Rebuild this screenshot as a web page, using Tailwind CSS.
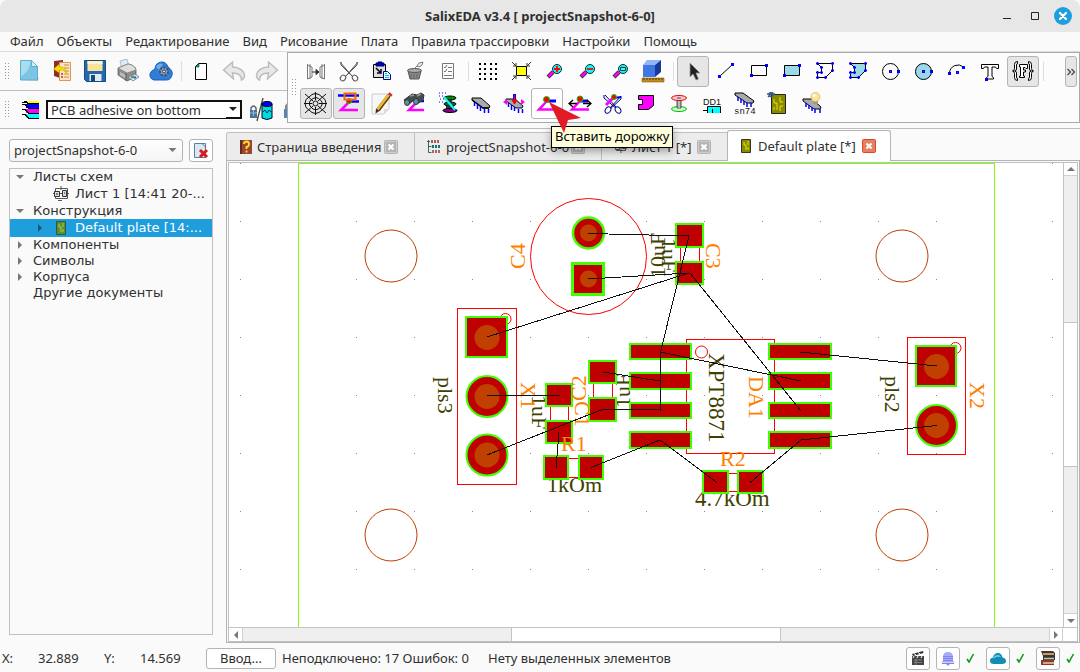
<!DOCTYPE html>
<html lang="ru">
<head>
    <meta charset="UTF-8">
    <meta name="viewport" content="width=device-width, initial-scale=1.0">
    <title>SalixEDA v3.4 [ projectSnapshot-6-0]</title>
    <script src="https://cdn.jsdelivr.net/npm/@tailwindcss/browser@4"></script>
</head>
<body class="relative flex flex-col h-screen overflow-hidden bg-[#fafafa] text-[#303030] text-[13px] leading-4 font-['Noto_Sans',sans-serif]">

    <!-- Title bar -->
    <header class="relative flex items-center justify-center h-8 shrink-0 bg-[#e7e7e7] rounded-t-lg">
        <h1 class="font-bold text-[13px]">SalixEDA v3.4 [ projectSnapshot-6-0]</h1>
        <div class="absolute right-2 top-[7px] flex items-center gap-[10px]">
            <button aria-label="Свернуть" class="w-[18px] h-[18px]"><svg class="w-[18px] h-[18px]" viewBox="0 0 18 18"><path d="M5 11.5h8" stroke="#222"/></svg></button>
            <button aria-label="Развернуть" class="w-[18px] h-[18px]"><svg class="w-[18px] h-[18px]" viewBox="0 0 18 18"><path d="M5.500 5.500h7v7h-7z" fill="none" stroke="#222"/></svg></button>
            <button aria-label="Закрыть" class="w-[18px] h-[18px] rounded-full bg-[#1f9ede]"><svg class="w-[18px] h-[18px]" viewBox="0 0 18 18"><path d="M6 6l6 6M12 6l-6 6" stroke="#fff" stroke-width="2.200" stroke-linecap="round"/></svg></button>
        </div>
    </header>

    <!-- Menu -->
    <nav class="flex items-center gap-[13px] h-5 px-[10px] pb-[2px] shrink-0 border-b border-[#dcdcdc]">
        <button>Файл</button>
        <button>Объекты</button>
        <button>Редактирование</button>
        <button>Вид</button>
        <button>Рисование</button>
        <button>Плата</button>
        <button>Правила трассировки</button>
        <button>Настройки</button>
        <button>Помощь</button>
    </nav>

    <!-- Toolbars -->
    <section class="flex shrink-0 border-b border-[#bdbdbd]">
        <div class="w-[287px] shrink-0 overflow-hidden">
            <div class="flex items-center gap-px h-[39px] pl-[5px] border-b border-[#bdbdbd]">
                <svg class="w-[7px] h-[17px] shrink-0" viewBox="0 0 7 17"><path d="M.5 0v17M3.500 0v17" stroke="#999" stroke-dasharray="1 2"/></svg>
                <button aria-label="Новый" class="w-8 h-[31px] shrink-0 px-1"><svg class="w-6 h-6" viewBox="0 0 24 24"><path d="M5 21l16 1 1-3-4-3z" fill="#ccc"/><path d="M3.500 1.500h11l6 6v13.500h-17z" fill="#7cc5e2" stroke="#5aaed0"/><path d="M4 2h10l-3 9-7 7z" fill="#a8dcef"/><path d="M14.500 1.500v6h6z" fill="#d9f1fa" stroke="#5aaed0"/></svg></button>
                <button aria-label="Открыть" class="w-8 h-[31px] shrink-0 px-1"><svg class="w-6 h-6" viewBox="0 0 24 24"><path d="M4 2l9-1v19l-9-3z" fill="#8c2f2c"/><path d="M9.500 3.500h11v18h-11z" fill="#fbe3bd" stroke="#d59b56"/><path d="M14 6h5M14 9h5M14 12h5M14 15h5M14 18h5" stroke="#c98c4a"/><circle cx="12" cy="15" r="1" fill="#c33"/><circle cx="12" cy="18" r="1" fill="#c33"/><path d="M3.500 10l6-5v3c5 0 7 2 7 6-2-3-4-3-7-3v3z" fill="#ffe100" stroke="#c59b00" stroke-width=".6"/></svg></button>
                <button aria-label="Сохранить" class="w-8 h-[31px] shrink-0 px-1"><svg class="w-6 h-6" viewBox="0 0 24 24"><path d="M1.500 1.500h21v21h-19l-2-2z" fill="#2268ad" stroke="#164a85"/><path d="M4.500 2h15v10h-15z" fill="#fbe39a"/><path d="M4.500 2h15v3h-15z" fill="#fff4c9"/><path d="M6.500 15h12v7h-12z" fill="#e3e9f0"/><path d="M8 16h4v6H8z" fill="#19497c"/></svg></button>
                <button aria-label="Печать" class="w-8 h-[31px] shrink-0 px-1"><svg class="w-6 h-6" viewBox="0 0 24 24"><path d="M4 2l7-2 2 8-7 2z" fill="#dcebf7" stroke="#8da9c0" stroke-width=".7"/><path d="M2 9l10-4q7 1 8 6v7l-9 4-9-6z" fill="#8d8d8d" stroke="#555" stroke-width=".7"/><path d="M2 9l10-4q7 1 8 6l-9 3z" fill="#dedede" stroke="#777" stroke-width=".6"/><path d="M4 13l6 3v4l-6-4z" fill="#bbb"/><path d="M10 14v8" stroke="#555"/><path d="M12 18l7-3 4 3-6 4z" fill="#d9e5f4" stroke="#668" stroke-width=".7"/><path d="M15 18.500l3-1" stroke="#3a3" stroke-width="2"/><path d="M18 19l2-1" stroke="#36c" stroke-width="2"/></svg></button>
                <button aria-label="Облако" class="w-8 h-[31px] shrink-0 px-1"><svg class="w-6 h-6" viewBox="0 0 24 24"><path d="M5 21a5 5 0 0 1-3-8c1-2 3-2 4-3 0-4 3-7 7-7 3 0 5 2 6 5 3 2 5 5 4 8-1 4-3 5-6 5z" fill="#2f7fd8" stroke="#1d5db0"/><path d="M7 8c1-3 4-4 7-3l-4 6z" fill="#6eaeee"/><circle cx="15" cy="12.500" r="4" fill="#8fa6bf" stroke="#3b5270" stroke-width="2" stroke-dasharray="2.500 1"/><circle cx="15" cy="12.500" r="1.500" fill="#dde6ef" stroke="#27405f"/></svg></button>
                <i class="w-[6px] h-5 shrink-0 flex justify-center"><i class="w-px bg-[#ddd]"></i></i>
                <button aria-label="Лист" class="w-8 h-[31px] shrink-0 px-1"><svg class="w-6 h-6" viewBox="0 0 24 24"><path d="M9.500 4.500h8v16h-11v-13z" fill="#fff" stroke="#000"/><path d="M6.500 8l3.500-4v4z" fill="#0aa08a" stroke="#033" stroke-width=".5"/></svg></button>
                <button aria-label="Отменить" class="w-8 h-[31px] shrink-0 px-1"><svg class="w-6 h-6" viewBox="0 0 24 24"><path d="M1.500 11l9-8v5c7 0 12 4 12 9 0 2-1 3-3 4 0-5-3-7-9-7l1 6z" fill="#e8e8e8" stroke="#bbb" stroke-width="1.400"/></svg></button>
                <button aria-label="Повторить" class="w-8 h-[31px] shrink-0 px-1"><svg class="w-6 h-6" viewBox="0 0 24 24"><path d="M22.500 11l-9-8v5c-7 0-12 4-12 9 0 2 1 3 3 4 0-5 3-7 9-7l-1 6z" fill="#e8e8e8" stroke="#bbb" stroke-width="1.400"/></svg></button>
            </div>
            <div class="flex items-center h-[37px] pl-[5px]">
                <svg class="w-[7px] h-[17px] shrink-0" viewBox="0 0 7 17"><path d="M.5 0v17M3.500 0v17" stroke="#999" stroke-dasharray="1 2"/></svg>
                <button aria-label="Слои" class="w-[34px] h-[31px] shrink-0 pl-[9px]"><svg class="w-[20px] h-[20px]" viewBox="0 0 20 20" shape-rendering="crispEdges"><path d="M5 1h13v2H5z" fill="#ff0"/><path d="M5 4h13v4H5z" fill="#00f"/><path d="M5 9h13v4H5z" fill="#f0f"/><path d="M5 14h13v4H5z" fill="#0ff"/><path d="M1 2.500h4l3 1h10M1 4.500h3l4 4h10M1 9.500h3l4 4h10M1 14.500h3l4 4h10M3 1.500h3" fill="none" stroke="#000"/></svg></button>
                <label class="relative block w-[196px] h-[19px] shrink-0">
                    <select aria-label="Слой" class="appearance-none block w-full h-full pl-[3px] pr-5 bg-white border-2 border-r-[1px] border-b-[1px] border-[#111] text-[13px] leading-4">
                        <option>PCB adhesive on bottom</option>
                    </select>
                    <span class="absolute right-0 bottom-0 w-4 h-[17px] border-r-2 border-b-2 border-[#111] bg-white pointer-events-none"><svg class="w-[14px] h-[14px]" viewBox="0 0 14 14"><path d="M3 5h8l-4 4z" fill="#222"/></svg></span>
                </label>
                <button aria-label="Фильтр слоёв" class="w-9 h-[31px] shrink-0 pl-[7px]"><svg class="w-6 h-6" viewBox="0 0 24 24"><path d="M2 12v-2q2.500-4 5 0v2" fill="none" stroke="#667" stroke-width="1.500"/><rect x="1" y="12" width="7" height="8" fill="#48729f"/><path d="M4.500 12v6M1 15h7" stroke="#9ab6d4"/><path d="M14 0L8 23" stroke="#444a20" stroke-width="1.300"/><path d="M13 6h10v14q-5 3-10 0z" fill="#0dd" stroke="#003"/><ellipse cx="18" cy="6" rx="5" ry="2.500" fill="#00f" stroke="#000"/><path d="M14 14l2-2 2 3 2-3 2 2" fill="none" stroke="#036"/></svg></button>
                <button aria-label="Блокировка" class="w-8 h-[31px] shrink-0 pl-1"><svg class="w-6 h-6" viewBox="0 0 24 24"><path d="M4 11V8q4-6 8 0v3" fill="none" stroke="#888" stroke-width="2"/><rect x="2" y="11" width="12" height="9" fill="#5b84b5"/></svg></button>
            </div>
        </div>

        <div class="flex flex-1 min-w-0 h-[71px] pt-[3px] pl-1 pr-[2px] border border-[#aaa] bg-[#fcfcfc]">
            <svg class="w-2 h-[17px] shrink-0 mt-[23px]" viewBox="0 0 8 17"><path d="M.5 0v17M3.500 0v17" stroke="#999" stroke-dasharray="1 2"/></svg>
            <div class="flex flex-col gap-px flex-1 min-w-0">
                <div class="flex gap-px">
                    <button aria-label="Отразить" class="w-8 h-[31px] shrink-0 px-1"><svg class="w-6 h-6" viewBox="0 0 24 24" fill="none" stroke="#777"><path d="M3.500 4v15M6 4v15M3 5l5 2v10l-5 2M20.500 4v15M18 4v15M21 5l-5 2v10l5 2"/><path d="M8 12h7M12 9.500l3 2.500-3 2.500z" stroke="#333" fill="#333"/></svg></button>
                    <button aria-label="Вырезать" class="w-8 h-[31px] shrink-0 px-1"><svg class="w-6 h-6" viewBox="0 0 24 24" fill="none" stroke="#555"><path d="M4 2v3l12 12M20 2v3L8 17M3 2l12 14M21 2L9 16"/><ellipse cx="6" cy="18" rx="2.500" ry="3" transform="rotate(40 6 18)"/><ellipse cx="18" cy="18" rx="2.500" ry="3" transform="rotate(-40 18 18)"/></svg></button>
                    <button aria-label="Вставить" class="w-8 h-[31px] shrink-0 px-1"><svg class="w-6 h-6" viewBox="0 0 24 24"><path d="M3.500 4.500h12v13h-12z" fill="#ddd" stroke="#000"/><path d="M6 3h2V2h4v1h2v3H6z" fill="#0000c0" stroke="#006"/><path d="M6 8l5 5M11 9v4H7" stroke="#000" stroke-width="1.500" fill="none"/><path d="M13.500 11.500h4l3 3v5h-7z" fill="#dff" stroke="#008"/><path d="M15 13.500h2M15 15.500h4M15 17.500h4" stroke="#0bc"/></svg></button>
                    <button aria-label="Очистить" class="w-8 h-[31px] shrink-0 px-1"><svg class="w-6 h-6" viewBox="0 0 24 24"><path d="M5 11h13l-2 8H7z" fill="#888" stroke="#555"/><ellipse cx="11.500" cy="10.500" rx="7" ry="2" fill="#aaa" stroke="#555"/><path d="M8 14v4M11 14v4M14 14v4" stroke="#666"/><path d="M14 6l2-3 4-1-1 3-3 2zM12 8l2-2" fill="#eee" stroke="#777"/></svg></button>
                    <button aria-label="Свойства" class="w-8 h-[31px] shrink-0 px-1"><svg class="w-6 h-6" viewBox="0 0 24 24" fill="none" stroke="#777"><path d="M6.500 3.500h11v15h-11zM12 7.500h4M12 11.500h4M8 15.500h8M8 7l1 1 2-3M8 11l1 1 2-3"/></svg></button>
                    <i class="w-[6px] h-[19px] mt-[6px] shrink-0 flex justify-center"><i class="w-px bg-[#ddd]"></i></i>
                    <button aria-label="Сетка" class="w-8 h-[31px] shrink-0 px-1"><svg class="w-6 h-6" viewBox="0 0 24 24" shape-rendering="crispEdges"><path d="M3 4h18M3 9h18M3 14h18M3 19h18" stroke="#000" stroke-width="2" stroke-dasharray="2 3.300"/></svg></button>
                    <button aria-label="Вписать" class="w-8 h-[31px] shrink-0 px-1"><svg class="w-6 h-6" viewBox="0 0 24 24"><path d="M7.500 6.500h10v9h-10z" fill="#ff0" stroke="#000"/><path d="M3 2l4 4M22 2l-4 4M3 20l4-4M22 20l-4-4M4 6h3V3M21 6h-3V3M4 16h3v3M21 16h-3v3" fill="none" stroke="#333"/></svg></button>
                    <button aria-label="Увеличить" class="w-8 h-[31px] shrink-0 px-1"><svg class="w-6 h-6" viewBox="0 0 24 24"><path d="M11 12l-5 5" stroke="#222" stroke-width="4"/><path d="M11 12L6.500 16.500" stroke="#f0f" stroke-width="2.500"/><circle cx="15" cy="9" r="4.500" fill="#0ff" stroke="#222"/><path d="M12 9h6M15 6v6" stroke="#f00" stroke-width="1.800"/></svg></button>
                    <button aria-label="Уменьшить" class="w-8 h-[31px] shrink-0 px-1"><svg class="w-6 h-6" viewBox="0 0 24 24"><path d="M11 12l-5 5" stroke="#222" stroke-width="4"/><path d="M11 12L6.500 16.500" stroke="#f0f" stroke-width="2.500"/><circle cx="15" cy="9" r="4.500" fill="#0ff" stroke="#222"/><path d="M12 9h6" stroke="#f00" stroke-width="1.800"/></svg></button>
                    <button aria-label="Масштаб окна" class="w-8 h-[31px] shrink-0 px-1"><svg class="w-6 h-6" viewBox="0 0 24 24"><path d="M11 12l-5 5" stroke="#222" stroke-width="4"/><path d="M11 12L6.500 16.500" stroke="#f0f" stroke-width="2.500"/><circle cx="15" cy="9" r="4.500" fill="#0ff" stroke="#222"/><path d="M12.500 7.500h5v3h-5z" fill="#6ee" stroke="#044"/></svg></button>
                    <button aria-label="3D вид" class="w-8 h-[31px] shrink-0 px-1"><svg class="w-6 h-6" viewBox="0 0 24 24"><path d="M1 18h22v4H1z" fill="#c08a1c" stroke="#8c6010" stroke-width=".6"/><path d="M3 18v2M6 18v2M9 18v2M12 18v2M15 18v2M18 18v2M21 18v2" stroke="#5c3c00"/><path d="M2 5h12v12H2z" fill="#3f78e6"/><path d="M2 5l4-5h14l-6 5z" fill="#8fb6fa"/><path d="M14 5l6-5v12l-6 5z" fill="#173a99"/></svg></button>
                    <i class="w-[6px] h-[19px] mt-[6px] shrink-0 flex justify-center"><i class="w-px bg-[#ddd]"></i></i>
                    <button aria-label="Выбор" class="w-8 h-[31px] shrink-0 px-[3px] rounded-[3px] border border-[#b4b4b4] bg-[#e6e6e6]"><svg class="w-6 h-6" viewBox="0 0 24 24"><path d="M9 3v14l3-3 3 6 2.500-1-2.500-6h4z" fill="#222" stroke="#999" stroke-width=".8"/></svg></button>
                    <button aria-label="Линия" class="w-8 h-[31px] shrink-0 px-1"><svg class="w-6 h-6" viewBox="0 0 24 24"><path d="M6 16L18 5" stroke="#000"/><path d="M4 15h3v3H4zM17 3h3v3h-3z" fill="#00f"/></svg></button>
                    <button aria-label="Прямоугольник" class="w-8 h-[31px] shrink-0 px-1"><svg class="w-6 h-6" viewBox="0 0 24 24"><path d="M4.500 5.500h15v10h-15z" fill="none" stroke="#000"/><path d="M3 14h3v3H3zM18 4h3v3h-3z" fill="#00f"/></svg></button>
                    <button aria-label="Закрашенный прямоугольник" class="w-8 h-[31px] shrink-0 px-1"><svg class="w-6 h-6" viewBox="0 0 24 24"><path d="M4.500 5.500h15v10h-15z" fill="#99d9ea" stroke="#000"/><path d="M3 14h3v3H3zM18 4h3v3h-3z" fill="#00f"/></svg></button>
                    <button aria-label="Полигон" class="w-8 h-[31px] shrink-0 px-1"><svg class="w-6 h-6" viewBox="0 0 24 24"><path d="M4.500 3.500h15v7l-7 7h-8v-5h4v-5z" fill="none" stroke="#000"/><path d="M3 3.500h3M4.500 2v3M18 3.500h3M19.500 2v3M18 10.500h3M19.500 9v3M11 17.500h3M12.500 16v3M3 17.500h3M4.500 16v3M3 12.500h3M4.500 11v3M7 7.500h3M8.500 6v3M7 12.500h3M8.500 11v3" stroke="#00f" stroke-width="1.500"/></svg></button>
                    <button aria-label="Закрашенный полигон" class="w-8 h-[31px] shrink-0 px-1"><svg class="w-6 h-6" viewBox="0 0 24 24"><path d="M4.500 3.500h15v7l-7 7h-8v-5h4v-5z" fill="#99d9ea" stroke="#000"/><path d="M3 3.500h3M4.500 2v3M18 3.500h3M19.500 2v3M18 10.500h3M19.500 9v3M11 17.500h3M12.500 16v3M3 17.500h3M4.500 16v3M3 12.500h3M4.500 11v3M7 7.500h3M8.500 6v3M7 12.500h3M8.500 11v3" stroke="#00f" stroke-width="1.500"/></svg></button>
                    <button aria-label="Окружность" class="w-8 h-[31px] shrink-0 px-1"><svg class="w-6 h-6" viewBox="0 0 24 24"><circle cx="11.500" cy="11.500" r="8" fill="none" stroke="#000"/><path d="M10 10h3v3h-3zM18 10h3v3h-3z" fill="#00f"/><path d="M11 11h1v1h-1z" fill="#f00"/></svg></button>
                    <button aria-label="Круг" class="w-8 h-[31px] shrink-0 px-1"><svg class="w-6 h-6" viewBox="0 0 24 24"><circle cx="11.500" cy="11.500" r="8" fill="#99d9ea" stroke="#000"/><path d="M10 10h3v3h-3zM18 10h3v3h-3z" fill="#00f"/><path d="M11 11h1v1h-1z" fill="#f00"/></svg></button>
                    <button aria-label="Дуга" class="w-8 h-[31px] shrink-0 px-1"><svg class="w-6 h-6" viewBox="0 0 24 24"><path d="M4.500 13a8.500 8.500 0 0 1 14-6" fill="none" stroke="#000"/><path d="M3 12h3v3H3zM11 11h3v3h-3zM17 6h3v3h-3z" fill="#00f"/><path d="M12 12h1v1h-1z" fill="#f00"/></svg></button>
                    <button aria-label="Текст" class="w-8 h-[31px] shrink-0 px-1"><svg class="w-6 h-6" viewBox="0 0 24 24"><path d="M3.500 4.500h17v4h-2l-1-1.500h-3.500v9.500l1.500 1v1.500h-7v-1.500l1.500-1V7H6.500l-1 1.500h-2z" fill="#fff" stroke="#000"/><path d="M7 18h3v3H7z" fill="#00f"/></svg></button>
                    <button aria-label="Поле" class="w-8 h-[31px] shrink-0 px-[3px] rounded-[3px] border border-[#b4b4b4] bg-[#e6e6e6]"><svg class="w-6 h-6" viewBox="0 0 24 24" fill="#fff" stroke="#000"><path d="M6.500 1.500q-3 0-3 3v4q0 2-2 2.500 2 .5 2 2.500v4q0 3 3 3v-2q-1 0-1-1.500v-4q0-2-2-2 2 0 2-2V5q0-1.500 1-1.500zM17.500 1.500q3 0 3 3v4q0 2 2 2.500-2 .5-2 2.500v4q0 3-3 3v-2q1 0 1-1.500v-4q0-2 2-2-2 0-2-2V5q0-1.500-1-1.500z"/><path d="M8.500 4.500h8v4h-1.500l-1-1h-1.500v2.500h2v2h-2v4h1v1.500h-5v-1.500h1v-9h-1z"/></svg></button>
                    <i class="w-[6px] h-[19px] mt-[6px] shrink-0 flex justify-center"><i class="w-px bg-[#ddd]"></i></i>
                    <button aria-label="Ещё" class="w-3 h-[31px] ml-auto shrink-0 rounded-[3px] border border-[#b4b4b4] bg-[#e6e6e6]"><svg class="w-[10px] h-[10px]" viewBox="0 0 10 10" fill="none" stroke="#444" stroke-width="1.200"><path d="M1.500 2l3 3-3 3M5.500 2l3 3-3 3"/></svg></button>
                </div>
                <div class="flex gap-px">
                    <button aria-label="Сеть" class="w-8 h-[31px] shrink-0 px-[3px] rounded-[3px] border border-[#b4b4b4] bg-[#e6e6e6]"><svg class="w-6 h-6" viewBox="0 0 24 24" fill="none" stroke="#111"><path d="M8 2.500q3.500-2 7 0l6 5q2 4 0 8l-6 5q-3.500 2-7 0l-6-5q-2-4 0-8zM9 6.500q3-2 5.500 0l3 2.500q1.500 2.500 0 5l-3 3q-2.500 1.500-5.500 0l-3-3q-1.500-2.500 0-5z"/><circle cx="11.500" cy="11.500" r="2.500"/><path d="M11.500 0v8M11.500 15v8M0 11.500h8M15 11.500h8M1 2l8 7M22 2l-8 7M1 21l8-7M22 21l-8-7"/></svg></button>
                    <button aria-label="Дорожки" class="w-8 h-[31px] shrink-0 px-[3px] rounded-[3px] border border-[#b4b4b4] bg-[#e6e6e6]"><svg class="w-6 h-6" viewBox="0 0 24 24"><path d="M1 3.500h21" stroke="#00f" stroke-width="2.500"/><path d="M10 9.500h12" stroke="#00f" stroke-width="2.500"/><path d="M12 10l-8 8h17" fill="none" stroke="#f0f" stroke-width="2.500"/><circle cx="12" cy="9" r="2.500" fill="#f00" stroke="#0c0"/><path d="M7.500 1.500h11v6h-11z" fill="none" stroke="#f60" stroke-width="2"/></svg></button>
                    <button aria-label="Редактировать" class="w-8 h-[31px] shrink-0 px-1"><svg class="w-6 h-6" viewBox="0 0 24 24"><path d="M2 2h17v15l-5 5H2z" fill="#f7f7f7" stroke="#ccc"/><path d="M14 22v-5h5z" fill="#ddd"/><path d="M19 3.500L8 18" stroke="#5d3c00" stroke-width="4"/><path d="M18.500 3L7.500 17.500" stroke="#f5b931" stroke-width="2.500"/><path d="M21 1.500l-1.500 2" stroke="#c2302d" stroke-width="4"/><path d="M5.500 21.500l.5-5 3.500 2.500z" fill="#333"/></svg></button>
                    <button aria-label="Найти дорожку" class="w-8 h-[31px] shrink-0 px-1"><svg class="w-6 h-6" viewBox="0 0 24 24"><path d="M14 10l-8 8h15" fill="none" stroke="#f0f" stroke-width="2.500"/><path d="M13 9h8" stroke="#00f" stroke-width="2.500"/><path d="M1 8l8-6 5 1 4-2 3 2-1 5-6 4-3-4-6 5z" fill="#454c4b" stroke="#333"/><path d="M7 4l4-1M14 4l4-2" stroke="#999" stroke-width="1.500"/><ellipse cx="4" cy="10.500" rx="2.500" ry="3" fill="#5793ab" stroke="#333"/><ellipse cx="13" cy="9.500" rx="2.500" ry="3" fill="#5793ab" stroke="#333"/></svg></button>
                    <button aria-label="Слои платы" class="w-8 h-[31px] shrink-0 px-1"><svg class="w-6 h-6" viewBox="0 0 24 24"><ellipse cx="14" cy="6" rx="6" ry="2" fill="#080" stroke="#000"/><ellipse cx="14" cy="12" rx="6" ry="2" fill="#064" stroke="#000"/><path d="M10 14h8v4h-8zM12 8h4v3h-4z" fill="#333"/><ellipse cx="14" cy="18.500" rx="7" ry="2" fill="#808" stroke="#000"/><path d="M8 5l11 13" stroke="#0ff" stroke-width="2"/><path d="M3 1h7M3 4h5M4 7h5M3 10h4" stroke="#00f" stroke-dasharray="1 2"/></svg></button>
                    <button aria-label="Компонент" class="w-8 h-[31px] shrink-0 px-1"><svg class="w-6 h-6" viewBox="0 0 24 24"><path d="M3 6h9l9 8-1 2h-6L3 8z" fill="#aaa" stroke="#000"/><path d="M3 8l11 8h6" fill="none" stroke="#000" stroke-width="1.500"/><path d="M5.500 10v4M8.500 12v5M11.500 14v5M15.500 17v4M19.500 17v4" stroke="#00f" stroke-width="1.500"/></svg></button>
                    <button aria-label="Переместить компонент" class="w-8 h-[31px] shrink-0 px-1"><svg class="w-6 h-6" viewBox="0 0 24 24"><path d="M4 7h9l8 7-1 2h-6L4 9z" fill="#aaa" stroke="#000"/><path d="M6.500 11v4M9.500 13v5M12.500 15v4M16.500 17v4M20.500 17v4" stroke="#00f" stroke-width="1.500"/><path d="M12.500 2v8" stroke="#00f" stroke-width="3"/><path d="M12.500 3v7M10 8l2.500 4L15 8z" stroke="#f00" fill="#f00"/><path d="M1 10l4-3v6zM23 10l-4-3v6z" fill="#f0f"/></svg></button>
                    <button aria-label="Вставить дорожку" class="w-8 h-[31px] shrink-0 px-[3px] rounded-[3px] border border-[#b4b4b4] bg-white"><svg class="w-6 h-6" viewBox="0 0 24 24"><path d="M12 9l-8 8.500h17" fill="none" stroke="#f0f" stroke-width="2.500"/><path d="M12 9h9" stroke="#00f" stroke-width="3"/><circle cx="11.500" cy="7.500" r="3" fill="#f00" stroke="#0c0"/></svg></button>
                    <button aria-label="Сдвинуть дорожку" class="w-8 h-[31px] shrink-0 px-1"><svg class="w-6 h-6" viewBox="0 0 24 24"><path d="M12 9l-8 8.500h17" fill="none" stroke="#f0f" stroke-width="2.500"/><path d="M12 9h8" stroke="#00f" stroke-width="3"/><circle cx="12" cy="7" r="3" fill="#f00" stroke="#0c0"/><path d="M1 11.500h8M15 11.500h8M5 8l-4 3.500L5 15M19 8l4 3.500L19 15" fill="none" stroke="#000" stroke-width="1.300"/></svg></button>
                    <button aria-label="Разрезать дорожку" class="w-8 h-[31px] shrink-0 px-1"><svg class="w-6 h-6" viewBox="0 0 24 24"><path d="M3 3v3l13 11M20 4v3L8 18M4 3l12 13M20 4L9 16" fill="none" stroke="#008"/><path d="M5 13l8-8" stroke="#f0f" stroke-width="3"/><path d="M13 6l7-1" stroke="#00f" stroke-width="2"/><circle cx="13" cy="5" r="2.500" fill="#f00" stroke="#0c0"/><ellipse cx="7" cy="18" rx="2.500" ry="3.500" transform="rotate(35 7 18)" fill="#fff" stroke="#008"/><ellipse cx="17" cy="18" rx="2.500" ry="3.500" transform="rotate(-35 17 18)" fill="#fff" stroke="#008"/></svg></button>
                    <button aria-label="Полигон меди" class="w-8 h-[31px] shrink-0 px-1"><svg class="w-6 h-6" viewBox="0 0 24 24"><path d="M4.500 3.500h15v10l-5 4h-10v-5h4v-5h-4z" fill="#f0f" stroke="#000"/></svg></button>
                    <button aria-label="Переходное отверстие" class="w-8 h-[31px] shrink-0 px-1"><svg class="w-6 h-6" viewBox="0 0 24 24"><ellipse cx="12" cy="17" rx="7.500" ry="2.500" fill="#cfc" stroke="#0b0"/><path d="M10 6h4v10h-4z" fill="#999" stroke="#555"/><path d="M12 7v9" stroke="#ddd"/><ellipse cx="12" cy="6" rx="7.500" ry="2.500" fill="#fcc" stroke="#e00"/><ellipse cx="12" cy="6" rx="2.500" ry="1" fill="#888"/></svg></button>
                    <button aria-label="Позиционное обозначение" class="w-8 h-[31px] shrink-0 px-1"><svg class="w-6 h-6" viewBox="0 0 24 24"><text x="3" y="13" font-family="Liberation Sans, sans-serif" font-size="9" fill="#111">DD1</text><path d="M7 15h13v6H7z" fill="#0ff"/><path d="M7.500 21v-6.500h13v6.500M3 18.500h4M12.500 17v4" fill="none" stroke="#000"/></svg></button>
                    <button aria-label="Номинал" class="w-8 h-[31px] shrink-0 px-1"><svg class="w-6 h-6" viewBox="0 0 24 24"><path d="M2 1h8l11 8-1 2h-6L2 3z" fill="#aaa" stroke="#000"/><path d="M5 5v4M8 7v4M11 9v4M14 11v4M18 11v4" stroke="#00f" stroke-width="1.500"/><text x="1" y="22" font-family="Liberation Mono, monospace" font-size="9" fill="#111">sn74</text></svg></button>
                    <button aria-label="Плата" class="w-8 h-[31px] shrink-0 px-1"><svg class="w-6 h-6" viewBox="0 0 24 24"><path d="M5.500 2.500h14v19h-14z" fill="#8a8a00" stroke="#222"/><path d="M8 7v4h3v7M14 5v5h3M14 19v-5h3M8 18v-3" fill="none" stroke="#e6e600"/><path d="M1 2h8M2 5l5-5M5 .5a2 2 0 1 1 0 4 2 2 0 1 1 0-4" fill="none" stroke="#3c5a8a" stroke-width="1.300"/></svg></button>
                    <button aria-label="Подсветить" class="w-8 h-[31px] shrink-0 px-1"><svg class="w-6 h-6" viewBox="0 0 24 24"><path d="M4 7h9l9 8-1 2h-6L4 9z" fill="#aaa" stroke="#000"/><path d="M7 11v4M10 13v4M13 15v4M16 17v4M21 17v4" stroke="#00f" stroke-width="1.500"/><path d="M14 8h5v4h-5z" fill="#999"/><circle cx="16.500" cy="5" r="4.500" fill="#f9e691" stroke="#c9b566" stroke-width=".7"/><circle cx="15" cy="3.500" r="1.500" fill="#fff"/></svg></button>
                </div>
            </div>
        </div>
    </section>

    <main class="flex flex-1 min-h-0">
        <!-- Project panel -->
        <aside class="flex flex-col gap-[6px] w-[226px] shrink-0 pt-[10px] pb-[10px] pl-[9px] pr-[13px]">
            <div class="flex gap-[6px] h-[23px] shrink-0">
                <label class="relative flex-1">
                    <select aria-label="Проект" class="appearance-none block w-full h-full pl-1 pr-6 pb-px rounded-[3px] border border-[#b4b4b4] bg-linear-to-b from-white to-[#f4f4f4] text-[13px]">
                        <option>projectSnapshot-6-0</option>
                    </select>
                    <svg class="absolute right-[6px] top-[9px] w-[9px] h-[5px] pointer-events-none" viewBox="0 0 9 5"><path d="M.5 0h8l-4 4z" fill="#777"/></svg>
                </label>
                <button aria-label="Закрыть проект" class="flex items-center justify-center w-6 rounded-[3px] border border-[#b4b4b4] bg-white"><svg class="w-4 h-4" viewBox="0 0 16 16"><path d="M1.500.500h11v14h-11z" fill="#dbe8f3" stroke="#5a7fa5"/><path d="M9 .5l4 4" stroke="#5a7fa5"/><path d="M7 7l7 7M14 7l-7 7" stroke="#d61a20" stroke-width="3"/></svg></button>
            </div>
            <ul role="tree" class="flex-1 min-h-0 overflow-hidden border border-[#c0c0c0] font-['DejaVu_Sans',sans-serif] whitespace-nowrap">
                <li role="treeitem" class="flex items-center h-4"><svg class="w-2 h-2 ml-[6px] mr-[9px]" viewBox="0 0 8 8"><path d="M0 2h8L4 6z" fill="#777"/></svg>Листы схем</li>
                <li role="treeitem" class="flex items-center h-[18px] pl-[43px]"><svg class="w-4 h-4 mr-[6px]" viewBox="0 0 16 16" fill="none" stroke="#555"><path d="M2.500 2.500h12v10h-12zM8 0v4M5 14.500h4M0 7.500h16"/><path d="M1.500 5.500h5v5h-5zM9.500 4.500h4v6h-4z" stroke="#333" fill="#ddd"/><path d="M3 8h2M11 7h1" stroke="#222"/></svg>Лист 1 [14:41 20-...</li>
                <li role="treeitem" class="flex items-center h-4"><svg class="w-2 h-2 ml-[6px] mr-[9px]" viewBox="0 0 8 8"><path d="M0 2h8L4 6z" fill="#777"/></svg>Конструкция</li>
                <li role="treeitem" aria-selected="true" class="flex items-center h-[18px] pl-[26px] bg-[#1f9ede] text-white"><svg class="w-2 h-2 mr-[9px]" viewBox="0 0 8 8"><path d="M2 0v8l4-4z" fill="#19587c"/></svg><svg class="w-4 h-4 mr-[6px]" viewBox="0 0 16 16"><path d="M3.500 1.500h9v13h-9z" fill="#5f8f2c" stroke="#2a5a45"/><path d="M6 4v3h2v5M10 3v4M10 12v-3" fill="none" stroke="#a5cf52"/></svg>Default plate [14:...</li>
                <li role="treeitem" class="flex items-center h-4"><svg class="w-2 h-2 ml-[6px] mr-[9px]" viewBox="0 0 8 8"><path d="M2 0v8l4-4z" fill="#777"/></svg>Компоненты</li>
                <li role="treeitem" class="flex items-center h-4"><svg class="w-2 h-2 ml-[6px] mr-[9px]" viewBox="0 0 8 8"><path d="M2 0v8l4-4z" fill="#777"/></svg>Символы</li>
                <li role="treeitem" class="flex items-center h-4"><svg class="w-2 h-2 ml-[6px] mr-[9px]" viewBox="0 0 8 8"><path d="M2 0v8l4-4z" fill="#777"/></svg>Корпуса</li>
                <li role="treeitem" class="flex items-center h-4 pl-[23px]">Другие документы</li>
            </ul>
        </aside>

        <!-- Documents -->
        <section class="flex flex-col flex-1 min-w-0 pb-[2px]">
            <div class="flex items-end h-8 shrink-0 pt-px border-b border-[#b4b4b4] whitespace-nowrap">
                <div class="flex items-center w-[189px] h-7 pl-3 pr-4 border border-b-0 border-[#c0c0c0] rounded-tl-[3px] bg-[#ececec]">
                    <svg class="w-[14px] h-4 mr-1" viewBox="0 0 14 16"><path d="M1 1h12v14H1z" fill="#9c4434"/><path d="M1 1h2v14H1z" fill="#642a20"/><path d="M5 5q0-2.500 2.500-2.500T10 5t-2.500 3v2M7.500 11.500v2" fill="none" stroke="#ffe11a" stroke-width="1.800"/></svg>
                    <button>Страница введения</button>
                    <button aria-label="Закрыть вкладку" class="w-[14px] h-[14px] ml-auto rounded-[2px] bg-[#b4b4b4]"><svg class="w-[14px] h-[14px]" viewBox="0 0 14 14"><path d="M1.500 1.500h11v11h-11z" fill="none" stroke="#ccc"/><path d="M4.500 4.500l5 5M9.500 4.500l-5 5" stroke="#fff" stroke-width="2.200"/></svg></button>
                </div>
                <div class="flex items-center w-[187px] h-7 pl-3 pr-4 border border-b-0 border-l-0 border-[#c0c0c0] bg-[#ececec]">
                    <svg class="w-[15px] h-4 mr-1" viewBox="0 0 15 16" fill="none"><path d="M1.500 1v12.500h3M1.500 7.500h3M0 2.500h3" stroke="#366"/><path d="M4 2.500h9" stroke="#b55" stroke-width="3" stroke-dasharray="2 1"/><path d="M5 7.500h9" stroke="#177" stroke-width="3" stroke-dasharray="2 1"/><path d="M5 12.500h9" stroke="#a66" stroke-width="3" stroke-dasharray="2 1"/></svg>
                    <button>projectSnapshot-6-0</button>
                    <button aria-label="Закрыть вкладку" class="w-[14px] h-[14px] ml-auto rounded-[2px] bg-[#b4b4b4]"><svg class="w-[14px] h-[14px]" viewBox="0 0 14 14"><path d="M1.500 1.500h11v11h-11z" fill="none" stroke="#ccc"/><path d="M4.500 4.500l5 5M9.500 4.500l-5 5" stroke="#fff" stroke-width="2.200"/></svg></button>
                </div>
                <div class="flex items-center w-[125px] h-7 pl-3 pr-4 border border-b-0 border-x-0 border-[#c0c0c0] bg-[#ececec]">
                    <svg class="w-[14px] h-4 mr-1" viewBox="0 0 14 16" fill="none" stroke="#555"><path d="M2.500 3.500h9v8h-9zM0 7.500h14M7 1v13"/><path d="M1.500 6.500h4v4h-4zM8.500 5.500h4v4h-4z" fill="#ddd"/></svg>
                    <button>Лист 1 [*]</button>
                    <button aria-label="Закрыть вкладку" class="w-[14px] h-[14px] ml-auto rounded-[2px] bg-[#b4b4b4]"><svg class="w-[14px] h-[14px]" viewBox="0 0 14 14"><path d="M1.500 1.500h11v11h-11z" fill="none" stroke="#ccc"/><path d="M4.500 4.500l5 5M9.500 4.500l-5 5" stroke="#fff" stroke-width="2.200"/></svg></button>
                </div>
                <div class="flex items-center w-[164px] h-[31px] -mb-px pl-3 pr-[14px] border border-b-0 border-[#b4b4b4] rounded-t-[3px] bg-white">
                    <svg class="w-[14px] h-4 mr-1" viewBox="0 0 14 16"><path d="M1.500 1.500h9v13h-9z" fill="#8a8a00" stroke="#333"/><path d="M4 4v3h2v5M8 3v4M8 12v-3" fill="none" stroke="#e6e600"/></svg>
                    <button>Default plate [*]</button>
                    <button aria-label="Закрыть вкладку" class="w-[14px] h-[14px] ml-auto rounded-[2px] bg-[#d9472f]"><svg class="w-[14px] h-[14px]" viewBox="0 0 14 14"><path d="M1 1h12v12H1z" fill="#e6805f"/><path d="M4.500 4.500l5 5M9.500 4.500l-5 5" stroke="#fff" stroke-width="2.200"/></svg></button>
                </div>
            </div>

            <div class="flex flex-1 min-h-0 pt-px px-px border border-t-0 border-[#b4b4b4]">
                <div class="flex flex-col flex-1 min-w-0 border border-[#c0c0c0]">
                    <div class="flex flex-1 min-h-0">
                        <div class="flex-1 min-w-0 overflow-hidden bg-white">
                            <svg class="w-full h-full" role="img" aria-label="Печатная плата">
                                <defs>
                                    <pattern id="grid" x="240" y="163" width="58" height="58" patternUnits="userSpaceOnUse">
                                        <path d="M0 0h1v1H0z" fill="#888"/>
                                    </pattern>
                                </defs>
                                <g transform="translate(-229 -163)">
                                    <rect x="229" y="163" width="2000" height="2000" fill="url(#grid)"/>
                                    <path d="M298.500 2000V163.500h696V2000" fill="none" stroke="#80ff00" shape-rendering="crispEdges"/>
                                    <!-- mounting holes -->
                                    <g fill="none" stroke="#bf4000">
                                        <circle cx="391" cy="256" r="26"/>
                                        <circle cx="902" cy="256" r="26"/>
                                        <circle cx="391" cy="535" r="26"/>
                                        <circle cx="902" cy="535" r="26"/>
                                    </g>
                                    <!-- part outlines -->
                                    <g fill="none" stroke="#f00">
                                        <circle cx="588.500" cy="256.500" r="58"/>
                                        <circle cx="505.500" cy="319" r="5.500"/>
                                        <circle cx="955.500" cy="348" r="5.500"/>
                                        <circle cx="701.500" cy="352" r="6"/>
                                        <g shape-rendering="crispEdges">
                                            <path d="M457.500 308.500h59v176h-59zM907.500 337.500h58v117h-58zM686.500 339.500h88v114h-88z"/>
                                            <path d="M680.500 248v14M699.500 248v14M550.500 406v15M568.500 406v15M593.500 383v15M612.500 383v15"/>
                                            <path d="M568 458.500h11M568 477.500h11M728 473.500h10M728 491.500h10"/>
                                        </g>
                                    </g>
                                    <!-- part values -->
                                    <g fill="#404000" font-family="'Liberation Serif', serif" font-size="22">
                                        <text transform="translate(665 278) rotate(-90)">10uF</text>
                                        <text transform="translate(662 238) rotate(90)">1uF</text>
                                        <text transform="translate(438 377) rotate(90)">pls3</text>
                                        <text transform="translate(532 395) rotate(90)">1uF</text>
                                        <text transform="translate(630 408) rotate(-90)">1uF</text>
                                        <text transform="translate(709 353) rotate(90)" font-size="23">XPT8871</text>
                                        <text transform="translate(885 376) rotate(90)">pls2</text>
                                        <text x="547" y="492">1kOm</text>
                                        <text x="695" y="506" font-size="23">4.7kOm</text>
                                    </g>
                                    <!-- pads -->
                                    <g fill="#bf0000" stroke="#40ff00" stroke-width="2">
                                        <circle cx="588.500" cy="233" r="15.500" stroke-width="2.500"/>
                                        <circle cx="487" cy="396.500" r="20.500"/>
                                        <circle cx="487" cy="455" r="20.500"/>
                                        <circle cx="936.500" cy="425.500" r="20.500"/>
                                        <g shape-rendering="crispEdges">
                                            <path d="M466 317h41v40h-41zM916 346h40v40h-40z"/>
                                            <path d="M630 344h61v15h-61zM630 373h61v16h-61zM630 403h61v15h-61zM630 432h61v16h-61z"/>
                                            <path d="M769 344h62v15h-62zM769 373h62v16h-62zM769 403h62v15h-62zM769 432h62v16h-62z"/>
                                            <path d="M676 224h27v23h-27zM676 262h27v22h-27zM546 384h26v22h-26zM546 421h26v22h-26z"/>
                                            <path d="M589 361h27v22h-27zM589 398h27v23h-27zM544 456h24v23h-24zM579 456h24v23h-24z"/>
                                            <path d="M703 471h25v22h-25zM738 471h25v22h-25z"/>
                                            <path d="M572.500 263.500h31v31h-31z" stroke-width="3"/>
                                        </g>
                                    </g>
                                    <g fill="#bf4000">
                                        <circle cx="588.500" cy="233" r="8.500"/>
                                        <circle cx="588.500" cy="279" r="8.500"/>
                                        <circle cx="487" cy="337.500" r="12.500"/>
                                        <circle cx="487" cy="396.500" r="12.500"/>
                                        <circle cx="487" cy="455" r="12.500"/>
                                        <circle cx="936.500" cy="366.500" r="12.500"/>
                                        <circle cx="936.500" cy="425.500" r="12.500"/>
                                    </g>
                                    <!-- designators -->
                                    <g fill="#ff8000" font-family="'Liberation Serif', serif" font-size="22">
                                        <text transform="translate(525 269) rotate(-90)">C4</text>
                                        <text transform="translate(706 243) rotate(90)">C3</text>
                                        <text transform="translate(521 382) rotate(90)">X1</text>
                                        <text transform="translate(586 401) rotate(-90)">C2</text>
                                        <text transform="translate(575 401) rotate(90)">C1</text>
                                        <text transform="translate(749 376) rotate(90)">DA1</text>
                                        <text transform="translate(970 382) rotate(90)">X2</text>
                                        <text x="561" y="451">R1</text>
                                        <text x="720" y="466">R2</text>
                                    </g>
                                    <!-- ratsnest -->
                                    <g fill="none" stroke="#111" shape-rendering="crispEdges">
                                        <path d="M588 233.500l101 2.500M588 279l101-6M487 337l202-64"/>
                                        <path d="M689 236l-28.500 116v59M690 273l111 138M660 352l141 29"/>
                                        <path d="M800 352l137 14M750 482.500l51-42.500 136-14.500"/>
                                        <path d="M603 372l57 9M487 455l115-45.500h58M487 395.500h73"/>
                                        <path d="M559 432l-3 36M591 467.500l69-27.500 57 42.500"/>
                                    </g>
                                </g>
                            </svg>
                        </div>
                        <div class="flex flex-col w-[14px] shrink-0 border-l border-[#c4c4c4] bg-[#efefef]">
                            <button aria-label="Вверх" class="h-[13px] shrink-0 flex items-center justify-center bg-white border-b border-[#d0d0d0]"><svg class="w-2 h-1" viewBox="0 0 8 4"><path d="M0 4h8L4 0z" fill="#777"/></svg></button>
                            <div class="basis-[146px] grow"></div>
                            <div class="basis-[146px] grow bg-white border-y border-[#c4c4c4]"></div>
                            <div class="basis-[146px] grow"></div>
                            <button aria-label="Вниз" class="h-[14px] shrink-0 flex items-center justify-center bg-white border-t border-[#d0d0d0]"><svg class="w-2 h-1" viewBox="0 0 8 4"><path d="M0 0h8L4 4z" fill="#777"/></svg></button>
                        </div>
                    </div>
                    <div class="flex h-[14px] shrink-0 border-t border-[#c4c4c4] bg-white">
                        <button aria-label="Влево" class="w-[14px] shrink-0 flex items-center justify-center border-r border-[#d0d0d0]"><svg class="w-1 h-2" viewBox="0 0 4 8"><path d="M4 0v8L0 4z" fill="#777"/></svg></button>
                        <div class="basis-0 grow bg-[#efefef]"></div>
                        <div class="basis-0 grow bg-white border-x border-[#c4c4c4]"></div>
                        <div class="basis-0 grow bg-[#efefef]"></div>
                        <button aria-label="Вправо" class="w-[14px] shrink-0 flex items-center justify-center border-x border-[#d0d0d0]"><svg class="w-1 h-2" viewBox="0 0 4 8"><path d="M0 0v8l4-4z" fill="#777"/></svg></button>
                        <div class="w-[14px] shrink-0"></div>
                    </div>
                </div>
            </div>
        </section>
    </main>

    <!-- Status bar -->
    <footer class="flex items-center h-[27px] shrink-0 pb-px pl-[2px] pr-1 whitespace-nowrap">
        <span class="w-9">X:</span>
        <span class="w-[66px]">32.889</span>
        <span class="w-9">Y:</span>
        <span class="w-[66px]">14.569</span>
        <button class="w-[70px] h-[21px] rounded-[3px] border border-[#b4b4b4] bg-white">Ввод...</button>
        <span class="w-[206px] pl-[6px]">Неподключено: 17 Ошибок: 0</span>
        <span class="pl-[6px]">Нету выделенных элементов</span>
        <div class="flex items-center ml-auto">
            <button aria-label="Видео" class="flex items-center justify-center w-6 h-[23px] mr-[6px] rounded-[3px] border border-[#b4b4b4] bg-white"><svg class="w-4 h-4" viewBox="0 0 16 16"><path d="M2 6h12v9H2z" fill="#444"/><path d="M2 4l11-3 .5 2L3 6z" fill="#333"/><path d="M4 3.500l2 1.500M8 2.500l2 1.500M4 6l-1 2M8 6L7 8M12 6l-1 2" stroke="#fff"/><path d="M4 10h8M4 12.500h8M6 9v6" stroke="#999" stroke-width=".7"/></svg></button>
            <button aria-label="Уведомления" class="flex items-center justify-center w-6 h-[23px] rounded-[3px] border border-[#b4b4b4] bg-white"><svg class="w-4 h-4" viewBox="0 0 16 16"><path d="M3 11V7q0-5 5-5t5 5v4l2 1.500H1z" fill="#a9abf7"/><path d="M3 6.500h10M3 8.500h10M3 10.500h10M2 13.500h12" stroke="#8183f0"/><circle cx="8" cy="14" r="1.500" fill="#8183f0"/></svg></button>
            <svg class="w-[10px] h-[10px] ml-[6px] mr-[10px]" viewBox="0 0 10 10"><path d="M1 6l2 3L7.500 1" fill="none" stroke="#090" stroke-width="1.500"/></svg>
            <button aria-label="Облако" class="flex items-center justify-center w-6 h-[23px] rounded-[3px] border border-[#b4b4b4] bg-white"><svg class="w-4 h-4" viewBox="0 0 16 16"><path d="M4 14Q0 14 0 10.500 0 8 3 7.500 4 3 8 3q3.500 0 4.500 4.500Q16 8 16 11q0 3-4 3z" fill="#128bb5"/><path d="M3 9q1-4 5-4 2 0 3 2-5-1-8 2z" fill="#5fd0ea"/></svg></button>
            <svg class="w-[10px] h-[10px] ml-[6px] mr-[10px]" viewBox="0 0 10 10"><path d="M1 6l2 3L7.500 1" fill="none" stroke="#090" stroke-width="1.500"/></svg>
            <button aria-label="Библиотека" class="flex items-center justify-center w-6 h-[23px] rounded-[3px] border border-[#b4b4b4] bg-white"><svg class="w-4 h-4" viewBox="0 0 16 16"><path d="M1 1h12l2 2v3H3z" fill="#4c3424"/><path d="M3 4h11" stroke="#d8c39a" stroke-width="1.500"/><path d="M3 6h12v4H3z" fill="#2a3a3a"/><path d="M4 8.500h10" stroke="#d8c39a" stroke-width="1.500"/><path d="M1 10h13v5H1z" fill="#8c3a2c"/><path d="M3 13h11" stroke="#e3cfaa" stroke-width="1.500"/></svg></button>
            <svg class="w-[10px] h-[10px] ml-[6px]" viewBox="0 0 10 10"><path d="M1 6l2 3L7.500 1" fill="none" stroke="#090" stroke-width="1.500"/></svg>
        </div>
    </footer>

    <!-- Tooltip and pointer -->
    <div role="tooltip" class="absolute left-[551px] top-[126px] px-[3px] py-px h-[22px] border border-black bg-[#ffffdc] text-black shadow-[0_3px_8px_rgba(0,0,0,0.35)] whitespace-nowrap">Вставить дорожку</div>
    <svg class="absolute left-[549px] top-[102px] w-8 h-8 pointer-events-none" viewBox="0 0 32 32"><path d="M0 0l32 16-13 2-4 13z" fill="#e01b24"/></svg>
</body>
</html>
